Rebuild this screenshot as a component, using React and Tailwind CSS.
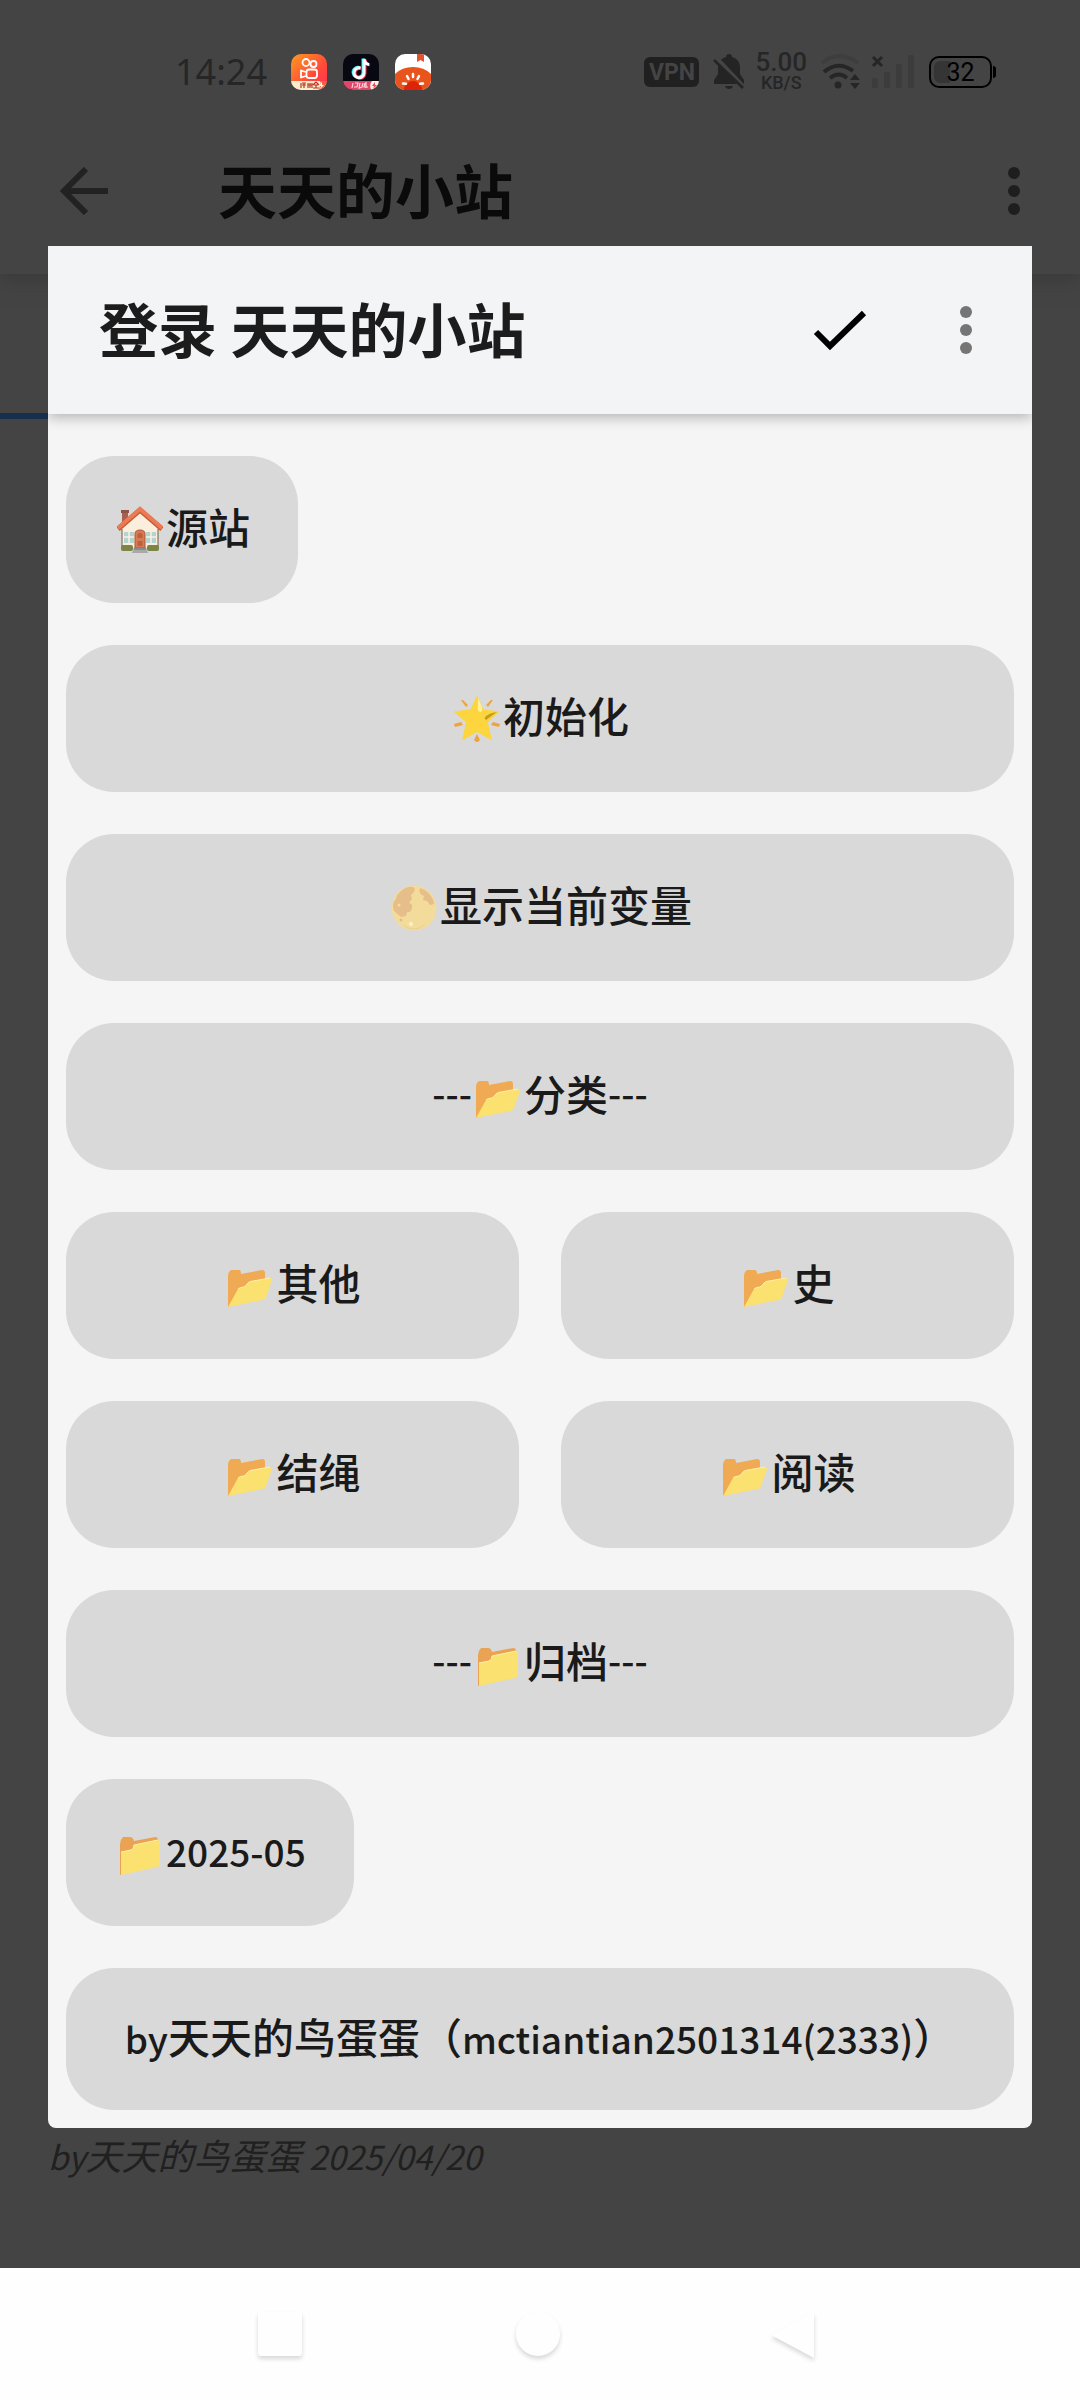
import { Fragment } from 'react'
import clsx from 'clsx'

const ROWS = [
  { items: [{ icon: 'house', label: '源站' }], fit: true },
  { items: [{ icon: 'star', label: '初始化' }] },
  { items: [{ icon: 'moon', label: '显示当前变量' }] },
  { items: [{ before: '---', icon: 'folderOpen', label: '分类', after: '---' }] },
  { items: [{ icon: 'folderOpen', label: '其他' }, { icon: 'folderOpen', label: '史' }] },
  { items: [{ icon: 'folderOpen', label: '结绳' }, { icon: 'folderOpen', label: '阅读' }] },
  { items: [{ before: '---', icon: 'folder', label: '归档', after: '---' }] },
  { items: [{ icon: 'folder', label: '2025-05' }], fit: true },
]

const GLYPHS = {
  house: (
    <>
      <rect x="5" y="8" width="6" height="13" fill="#a8604f" />
      <rect x="4" y="7" width="8" height="3" fill="#8f5347" />
      <path d="M5 24 23 8l18 16v20H5z" fill="#fbeedd" />
      <path d="M5 26v18M41 26v18" stroke="#6b5b4b" strokeWidth="1" />
      <path d="m1 26 22-19 22 19" fill="none" stroke="#c35b35" strokeWidth="5" />
      <path d="m1 25 22-19 22 19" fill="none" stroke="#ec7a55" strokeWidth="4" />
      <path d="M7 29h10v11H7zM29 29h10v11H29z" fill="#b5d3cf" />
      <path d="M12 29v11M7 34h10M34 29v11M29 34h10" stroke="#f7f2e8" strokeWidth="1.500" />
      <path d="M18 45V31q0-4 5-4t5 4v14z" fill="#d97b52" stroke="#a9573a" strokeWidth="1" />
      <path d="M20.500 35v-3q0-2 2.500-2t2.500 2v3zM20.500 38h5v5h-5z" fill="#b9603f" />
      <rect x="4" y="42" width="12" height="6" rx="2" fill="#7c8446" />
      <rect x="30" y="42" width="12" height="6" rx="2" fill="#7c8446" />
      <path d="M17 45h12l2 5H15z" fill="#a9a9a9" />
      <path d="M17 45h12v2H17z" fill="#8c8c8c" />
    </>
  ),
  star: (
    <>
      <path d="m7 8 2 0 5 5-2 2zM39 8l-2 0-5 5 2 2zM0 32l1 3 8-2-2-3zM46 32l-1 3-8-2 2-3zM23 42l3 6-2 2h-2l-2-2z" fill="#eea33c" />
      <path
        d="m23 5 6 13 15 2-11 10 4 17-14-8-14 8 4-17L1 20l16-2z"
        fill="#fcd53f"
        stroke="#fcd53f"
        strokeWidth="1.500"
        strokeLinejoin="round"
      />
      <path d="m24 6 4 9q1 5-2 5-3-1-2-7z" fill="#fff19a" />
      <path d="m43 20-11 8q-2-1-1-3 4-4 12-5z" fill="#c99a1c" />
    </>
  ),
  moon: (
    <>
      <circle cx="23" cy="27" r="22.500" fill="#f3dc9b" />
      <path d="M10 10q6-5 12-4 3 1 1 5l-3 3 1 4-3 4q4 1 3 5-1 5-5 4l-1 4-5 1-7-6q-3-8 2-12l1-4z" fill="#e3b987" opacity=".85" />
      <path d="M29 7q7 2 11 8 3 4 3 8l-4 1-3-4-4-1 1-4q-6-2-4-8z" fill="#e3b987" opacity=".85" />
      <circle cx="10" cy="39" r="1.500" fill="#e6bd8a" />
      <circle cx="20" cy="43" r="2" fill="#fdf1cb" />
      <circle cx="8" cy="24" r="1.500" fill="#f3dc9b" />
      <path d="M12 44q11 8 22 0" fill="none" stroke="#edcf8d" strokeWidth="1" />
    </>
  ),
  folderOpen: (
    <>
      <path d="M1 48V17q0-4 3-6h8q2 0 2 4l21-4q3 0 3 3v20z" fill="#efaa53" />
      <path d="M1 48 11 30q2-2 6-2 3-2 4-4 2-2 5-2l17-3q3 0 2 2l-6 17q-1 3-4 3z" fill="#fbe170" />
      <path d="M11 30q2-2 6-2 3-2 4-4 2-2 5-2l17-3" fill="none" stroke="#fff0a8" strokeWidth="1" />
    </>
  ),
  folder: (
    <>
      <path d="M3 49V18q0-4 3-7h7q3 0 4 4l21-4q3 0 3 3v20z" fill="#e9a353" />
      <path d="M4 49V26l10-2q3-1 3-5l24-5q2 0 2 3v20q0 3-3 4z" fill="#fbe170" />
      <path d="M4 26l10-2q3-1 3-5l24-5" fill="none" stroke="#fff0a8" strokeWidth="1" />
    </>
  ),
}

// CJK runs are drawn at 42px, latin runs a little smaller
function Mixed({ text, latin }) {
  return text.split(/([\x20-\x7e]+)/).filter(Boolean).map((part, i) => (
    /^[\x20-\x7e]/.test(part)
      ? <span key={i} className={clsx('leading-none', latin)}>{part}</span>
      : <Fragment key={i}>{part}</Fragment>
  ))
}

function Glyph({ name }) {
  return (
    <svg viewBox="0 0 46 50" className="mx-[3px] h-[50px] w-[46px] shrink-0" aria-hidden="true">
      {GLYPHS[name]}
    </svg>
  )
}

function MenuButton({ item, fit }) {
  return (
    <button
      type="button"
      className={clsx(
        'flex items-center justify-center rounded-[48px] bg-[#d9d9d9] px-12 pt-[46px] pb-[50px] text-[42px] leading-[47px] font-medium whitespace-nowrap text-[#1a1a1a]',
        !fit && 'flex-1',
      )}
    >
      {item.before && <span className="pb-1 text-[37px]">{item.before}</span>}
      <Glyph name={item.icon} />
      <span className="pb-1"><Mixed text={item.label} latin="text-[37px]" /></span>
      {item.after && <span className="pb-1 text-[37px]">{item.after}</span>}
    </button>
  )
}

function Dots() {
  return (
    <svg viewBox="0 0 12 48" className="h-12 w-3" fill="currentColor" aria-hidden="true">
      <circle cx="6" cy="6" r="6" />
      <circle cx="6" cy="24" r="6" />
      <circle cx="6" cy="42" r="6" />
    </svg>
  )
}

function AppBadges() {
  return (
    <div className="flex gap-4">
      <svg viewBox="0 0 36 36" className="size-9 rounded-[10px]" aria-hidden="true">
        <defs>
          <linearGradient id="kuai" x1="0" y1="0" x2="1" y2="1">
            <stop offset="0" stopColor="#ff9a1f" />
            <stop offset=".6" stopColor="#ff4a3a" />
            <stop offset="1" stopColor="#ff2f55" />
          </linearGradient>
        </defs>
        <rect width="36" height="36" fill="url(#kuai)" />
        <g fill="none" stroke="#fff" strokeWidth="1.800">
          <circle cx="15" cy="8.500" r="3.500" />
          <circle cx="22.500" cy="10" r="3" />
          <rect x="15.500" y="15.500" width="10.500" height="8.500" rx="2.500" />
          <path d="m15 18-5-1.500v7L15 22" strokeLinejoin="round" />
        </g>
        <path d="M0 27h28l8 4v5H0z" fill="#fdeccb" />
        <path d="M30 27h6v9h-8z" fill="#f4613f" />
        <path d="M10 29v5m1-5h4m-2 0v5m-2-3h4M17 29v5m0-3h4m-2-2v5m2-5v5M25 28l-3 3m3-3 3 3m-5 0h4m-2 0v3m-3 0h6" fill="none" stroke="#b8352a" strokeWidth="1.200" />
        <path d="m31 28-3 4h2l-1 3 4-4h-2z" fill="#fff" />
      </svg>
      <svg viewBox="0 0 36 36" className="size-9 rounded-[10px]" aria-hidden="true">
        <rect width="36" height="36" fill="#070812" />
        <g fill="none" strokeWidth="3">
          <path d="M16.500 13.500a5 5 0 1 0 3.500 5V4.500q1 5 5 5.500" stroke="#25f4ee" />
          <path d="M18.500 14.500a5 5 0 1 0 3.500 5V5.500q1 5 5 5.500" stroke="#fe2c55" />
          <path d="M17.500 14a5 5 0 1 0 3.500 5V5q1 5 5 5.500" stroke="#fff" />
        </g>
        <path d="M0 27h36v9H0z" fill="#e0466a" />
        <path d="m10 29-1 5M12 29h3l-1 4h-3M17 29l-1 5 3-1 1-4M22 29l-1 4h4M23 28v6" fill="none" stroke="#ffd3d8" strokeWidth="1.200" />
        <path d="M29 27h7v9h-8q-2-6 1-9z" fill="#fff0e4" />
        <path d="m32 28-3 4h2l-1 3 4-4h-2z" fill="#ee4b56" />
      </svg>
      <svg viewBox="0 0 36 36" className="size-9 rounded-[10px]" aria-hidden="true">
        <rect width="36" height="36" fill="#fff" />
        <path d="M22 0h7v8l-3.500-2L22 8z" fill="#e2542f" />
        <path d="M0 20q7-7 18-7t18 7v16H0z" fill="#e9531c" />
        <path d="M8 36q4-9 10-9t10 9z" fill="#dd2408" />
        <path d="M18 20v3M12 22l1.500 3M24 22l-1.500 3M8 29.500l3 .2M28 29.500l-3 .2" stroke="#fff" strokeWidth="2.500" strokeLinecap="round" />
      </svg>
    </div>
  )
}

function StatusBar() {
  return (
    <div className="flex items-center justify-between pt-[54px] pr-[84px] pb-[18px] pl-[175px] text-[#262626]">
      <div className="flex h-9 items-center gap-6">
        <span className="font-['Noto_Sans'] text-[36px] leading-9">14:24</span>
        <AppBadges />
      </div>
      <div className="flex h-9 items-center font-['Roboto']">
        <span className="flex h-[30px] w-[55px] items-center justify-center rounded-md bg-[#202020] text-[23px] leading-none font-bold text-[#444]">VPN</span>
        <svg viewBox="0 0 32 36" className="ml-[14px] h-9 w-8" aria-hidden="true">
          <path d="M16 0q3 0 3 3 8 2 8 11v6l4 6v4H1v-4l4-6v-6q0-9 8-11 0-3 3-3z" fill="#242424" />
          <path d="M12 32h8q-1 3-4 3t-4-3z" fill="#242424" />
          <path d="m2 3 30 32" stroke="#444" strokeWidth="5" />
          <path d="m1 6 29 28" stroke="#242424" strokeWidth="2.500" />
        </svg>
        <div className="ml-[10px] flex flex-col items-center font-medium">
          <span className="text-[26px] leading-[22px]">5.00</span>
          <span className="text-[18px] leading-[20px]">KB/S</span>
        </div>
        <svg viewBox="0 0 40 36" className="ml-[14px] h-9 w-10" fill="none" aria-hidden="true">
          <path d="M1 9q17-14 36 0" stroke="#3e3e3e" strokeWidth="4" />
          <path d="M3 18q14-12 29-1" stroke="#262626" strokeWidth="4" />
          <path d="M9 24q9-7 17 0" stroke="#262626" strokeWidth="4" />
          <circle cx="17" cy="31" r="3.500" fill="#262626" />
          <path d="m29 26 5-6 5 6zM29 29h10l-5 6z" fill="#262626" />
        </svg>
        <svg viewBox="0 0 44 36" className="ml-[10px] h-9 w-11" aria-hidden="true">
          <path d="m2 3 9 9m0-9-9 9" stroke="#262626" strokeWidth="3" />
          <g fill="#3c3c3c">
            <rect x="1" y="24" width="6" height="10" rx="2" />
            <rect x="13" y="18" width="6" height="16" rx="2" />
            <rect x="25" y="10" width="6" height="24" rx="2" />
            <rect x="37" y="1" width="6" height="33" rx="2" />
          </g>
        </svg>
        <div className="ml-[14px] flex items-center">
          <div className="h-8 w-[63px] rounded-[10px] border-2 border-black p-[3px]">
            <div className="flex h-full items-center justify-center rounded-md bg-linear-to-r from-[#353535] from-30% to-transparent to-30% text-[25px] leading-none text-black">32</div>
          </div>
          <div className="ml-px h-3 w-[3px] rounded-r-sm bg-black" />
        </div>
      </div>
    </div>
  )
}

function Page() {
  return (
    <div className="flex flex-1 flex-col">
      <header className="bg-[#444] shadow-[0_6px_18px_#3a3a3a]">
        <StatusBar />
        <div className="flex h-[166px] items-center pr-[60px] pl-[60px]">
          <button type="button" aria-label="返回" className="text-[#222]">
            <svg viewBox="0 0 48 48" className="size-12" fill="none" stroke="currentColor" strokeWidth="6" aria-hidden="true">
              <path d="M48 24H5M26 2 4 24l22 22" />
            </svg>
          </button>
          <h1 className="ml-[110px] flex-1 pb-1 text-[59px] leading-[72px] font-bold text-[#0a0a0a]">天天的小站</h1>
          <button type="button" aria-label="更多" className="text-[#1e1e1e]"><Dots /></button>
        </div>
      </header>
      <div className="mt-[139px] h-[6px] w-1/3 bg-[#14304d]" />
      <p className="mt-auto mb-[87px] px-12 text-[36px] leading-[54px] italic text-[#202020]">
        <Mixed text="by天天的鸟蛋蛋 2025/04/20" latin="text-[33px]" />
      </p>
    </div>
  )
}

function LoginDialog() {
  return (
    <section role="dialog" aria-label="登录 天天的小站" className="overflow-hidden rounded-b-lg bg-[#f5f5f5]">
      <header className="relative flex h-[168px] items-center bg-[#f3f4f6] pr-[60px] pl-[51px] shadow-[0_4px_12px_#00000040]">
        <h2 className="flex-1 pb-1 text-[59px] leading-[72px] font-bold text-[#1c1c1c]">登录 天天的小站</h2>
        <button type="button" aria-label="确定" className="text-black">
          <svg viewBox="0 0 54 42" className="h-[42px] w-[54px]" fill="none" stroke="currentColor" strokeWidth="6" aria-hidden="true">
            <path d="m3 23 14 14L51 4" />
          </svg>
        </button>
        <button type="button" aria-label="更多" className="ml-[93px] text-[#757575]"><Dots /></button>
      </header>
      <div className="flex flex-col gap-[42px] px-[18px] pt-[42px] pb-[18px]">
        {ROWS.map((row, i) => (
          <div key={i} className="flex gap-[42px]">
            {row.items.map(item => <MenuButton key={item.label} item={item} fit={row.fit} />)}
          </div>
        ))}
        <button
          type="button"
          className="rounded-[48px] bg-[#d9d9d9] px-12 pt-[44px] pb-[51px] text-[42px] leading-[47px] font-medium whitespace-nowrap text-[#1a1a1a]"
        >
          <Mixed text="by天天的鸟蛋蛋（mctiantian2501314(2333)）" latin="text-[37px]" />
        </button>
      </div>
    </section>
  )
}

function NavBar() {
  return (
    <nav className="flex h-[132px] items-center justify-between bg-[#fefefe] pr-[264px] pl-[256px]">
      <button type="button" aria-label="最近任务">
        <svg viewBox="0 0 48 48" className="size-12 overflow-visible drop-shadow-[0_3px_2px_#00000026]" aria-hidden="true">
          <rect x="2" y="2" width="44" height="44" rx="3" fill="#fefefe" />
        </svg>
      </button>
      <button type="button" aria-label="主页">
        <svg viewBox="0 0 48 48" className="size-12 overflow-visible drop-shadow-[0_3px_2px_#00000026]" aria-hidden="true">
          <circle cx="26" cy="24" r="22" fill="#fefefe" />
        </svg>
      </button>
      <button type="button" aria-label="返回">
        <svg viewBox="0 0 48 48" className="size-12 overflow-visible drop-shadow-[0_3px_2px_#00000026]" aria-hidden="true">
          <path d="M3 25 46 2v46z" fill="#fefefe" />
        </svg>
      </button>
    </nav>
  )
}

export default function App() {
  return (
    <div className="flex min-h-screen flex-col bg-[#444] font-['Noto_Sans_CJK_SC',sans-serif]">
      <main className="relative flex flex-1 flex-col">
        <Page />
        <div className="absolute inset-0 px-12 pt-[246px]">
          <LoginDialog />
        </div>
      </main>
      <NavBar />
    </div>
  )
}
